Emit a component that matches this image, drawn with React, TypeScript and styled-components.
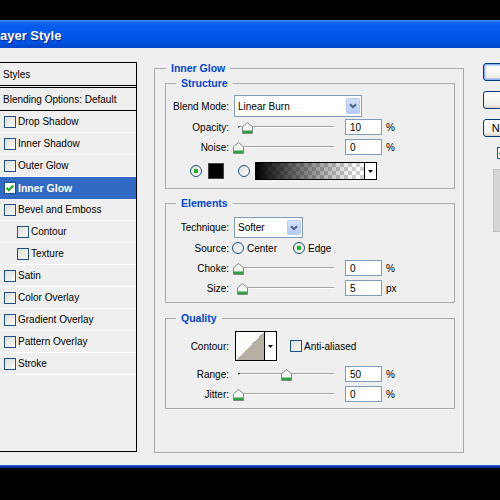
import React from "react";
import styled, { createGlobalStyle } from "styled-components";

const ui = `"Liberation Sans", Arial, sans-serif`;

const GlobalStyle = createGlobalStyle`
  html, body {
    margin: 0;
    padding: 0;
    background: #000;
    overflow: hidden;
  }
  body {
    font-family: ${ui};
    font-size: 10px;
    color: #000;
  }
`;

const Screen = styled.div`
  width: 500px;
  height: 500px;
  overflow: hidden;
  padding-top: 20px;
  box-sizing: border-box;
`;

const Window = styled.div`
  margin-left: -20px;
  width: 620px;
`;

const TitleBar = styled.div`
  height: 28px;
  box-sizing: border-box;
  display: flex;
  align-items: center;
  padding: 2px 0 0 12px;
  background: linear-gradient(
    to bottom,
    #4a93f7 0px,
    #1c6cf4 2px,
    #0a5eef 5px,
    #0057ea 14px,
    #0052e2 22px,
    #0146c8 28px
  );
  color: #fff;
  font: bold 13px ${ui};
  text-shadow: 1px 1px 0 #0b2a8f;
`;

const Body = styled.div`
  height: 417px;
  box-sizing: border-box;
  background: #efefef;
  display: flex;
  align-items: flex-start;
  padding: 14px 0 0 18px;
`;

const BottomFrame = styled.div`
  height: 3px;
  background: linear-gradient(to bottom, #3567e0, #0a2fae 60%, #041a6a);
`;

/* ---- styles list on the left ---- */

const StylesPanel = styled.div`
  width: 139px;
  height: 390px;
  box-sizing: border-box;
  border: 1px solid #000;
  background: #efefef;
  display: flex;
  flex-direction: column;
  flex-shrink: 0;
`;

const PanelHeader = styled.div`
  height: 25px;
  box-sizing: border-box;
  display: flex;
  align-items: center;
  padding-left: 4px;
  border-bottom: 3px double #000;
`;

const BlendingRow = styled.div`
  height: 23px;
  box-sizing: border-box;
  display: flex;
  align-items: center;
  padding-left: 4px;
  border-bottom: 1px solid #000;
`;

const StyleRow = styled.div<{ $active?: boolean; $sub?: boolean }>`
  height: 22px;
  box-sizing: border-box;
  display: flex;
  align-items: center;
  gap: 2px;
  padding-left: ${(p) => (p.$sub ? 18 : 5)}px;
  border-bottom: 1px solid ${(p) => (p.$active ? "#316ac5" : "#fff")};
  background: ${(p) => (p.$active ? "#316ac5" : "transparent")};
  color: ${(p) => (p.$active ? "#fff" : "#000")};
  font-weight: ${(p) => (p.$active ? "bold" : "normal")};
  font-size: ${(p) => (p.$active ? "10.5px" : "10px")};
`;

const CheckBox = styled.span<{ $white?: boolean }>`
  width: 12px;
  height: 12px;
  box-sizing: border-box;
  border: 1px solid #1c5180;
  background: ${(p) => (p.$white ? "#fff" : "linear-gradient(135deg, #dcdcd7, #fbfbf9)")};
  display: inline-flex;
  align-items: center;
  justify-content: center;
  flex-shrink: 0;
`;

const Tick = () => (
  <svg width="10" height="10" viewBox="0 0 10 10">
    <path d="M1.5 4.8 L3.8 7.2 L8.3 2.5" fill="none" stroke="#21a121" strokeWidth="2" />
  </svg>
);

/* ---- settings ---- */

const GroupBox = styled.fieldset`
  margin: 0 0 0 17px;
  padding: 3px 8px 0 10px;
  width: 310px;
  height: 391px;
  box-sizing: border-box;
  border: 1px solid #a9a9a9;
  min-width: 0;
  flex-shrink: 0;
`;

const Legend = styled.legend<{ $inset: number }>`
  padding: 0 5px;
  margin-left: ${(p) => p.$inset}px;
  font: bold 10.5px/12px ${ui};
  color: #0046d5;
`;

const SubGroup = styled.fieldset<{ $top: number; $h: number }>`
  margin: ${(p) => p.$top}px 0 0 0;
  padding: 0 0 0 7px;
  width: 290px;
  height: ${(p) => p.$h}px;
  box-sizing: border-box;
  border: 1px solid #a9a9a9;
  min-width: 0;
`;

const Row = styled.div<{ $top: number; $h: number }>`
  display: flex;
  align-items: center;
  margin-top: ${(p) => p.$top}px;
  height: ${(p) => p.$h}px;
`;

const Label = styled.span`
  width: 56px;
  margin-right: 5px;
  text-align: right;
  white-space: nowrap;
  flex-shrink: 0;
`;

const Select = styled.div<{ $w: number }>`
  width: ${(p) => p.$w}px;
  height: 100%;
  box-sizing: border-box;
  border: 1px solid #7f9db9;
  background: #fff;
  display: flex;
  align-items: center;
  justify-content: space-between;
  padding: 0 1px 0 3px;
`;

const ComboButton = styled.span`
  width: 14px;
  height: calc(100% - 4px);
  box-sizing: border-box;
  border: 1px solid #b9cbf3;
  border-radius: 2px;
  background: linear-gradient(to bottom, #d3e0fd, #b6cbf8);
  display: flex;
  align-items: center;
  justify-content: center;
`;

const Chevron = () => (
  <svg width="8" height="6" viewBox="0 0 8 6">
    <path d="M1 1.2 L4 4.2 L7 1.2" fill="none" stroke="#4d6185" strokeWidth="2" />
  </svg>
);

const SliderBox = styled.div`
  position: relative;
  width: 96px;
  height: 100%;
  margin-left: 4px;
  flex-shrink: 0;
`;

const Track = styled.div`
  margin-top: 7px;
  height: 1px;
  background: #a2a2a2;
  border-bottom: 1px solid #fff;
  border-left: 2px solid #555;
`;

const Thumb = styled.svg`
  position: absolute;
  top: 3px;
`;

const NumberField = styled.div`
  width: 37px;
  height: 16px;
  box-sizing: border-box;
  margin-left: 11px;
  border: 1px solid #7f9db9;
  background: #fff;
  padding-left: 4px;
  display: flex;
  align-items: center;
  flex-shrink: 0;
`;

const Unit = styled.span`
  margin-left: 4px;
`;

const Radio = styled.span<{ $on?: boolean; $gap?: number }>`
  width: 12px;
  height: 12px;
  box-sizing: border-box;
  border-radius: 50%;
  border: 1px solid #1c5180;
  background: ${(p) =>
    p.$on
      ? "radial-gradient(circle, #2fbf2f 0, #21a121 2px, transparent 2.6px), linear-gradient(135deg, #dcdcd7, #fff)"
      : "linear-gradient(135deg, #dcdcd7, #fff)"};
  margin-left: ${(p) => p.$gap ?? 0}px;
  flex-shrink: 0;
`;

const RadioText = styled.span`
  margin-left: 3px;
`;

const Swatch = styled.span`
  width: 16px;
  height: 16px;
  box-sizing: border-box;
  margin-left: 6px;
  background: #000;
  border: 1px solid #444;
`;

const GradientPicker = styled.div`
  width: 122px;
  height: 18px;
  margin-left: 5px;
  box-sizing: border-box;
  border: 1px solid #000;
  display: flex;
`;

const GradientRamp = styled.div`
  flex: 1;
  background:
    linear-gradient(to right, #000 0%, rgba(0, 0, 0, 0.85) 12%, rgba(0, 0, 0, 0) 92%),
    conic-gradient(#cfcfcf 25%, #fff 0 50%, #cfcfcf 0 75%, #fff 0) 0 0 / 8px 8px;
`;

const PickerArrow = styled.div`
  width: 11px;
  border-left: 1px solid #000;
  background: #fff;
  display: flex;
  align-items: center;
  justify-content: center;
`;

const DownTriangle = () => (
  <svg width="5" height="3" viewBox="0 0 5 3">
    <path d="M0 0 H5 L2.5 3 Z" fill="#000" />
  </svg>
);

const ContourPicker = styled.div`
  width: 42px;
  height: 30px;
  margin-left: 1px;
  box-sizing: border-box;
  border: 1px solid #000;
  display: flex;
`;

const ContourCurve = styled.div`
  flex: 1;
  background: linear-gradient(to bottom right, #fcfcfa 50%, #b5afa6 50%);
`;

const InlineCheck = styled.span`
  display: flex;
  align-items: center;
  margin-left: 13px;
  gap: 2px;
`;

/* ---- buttons on the right ---- */

const SideColumn = styled.div`
  margin-left: 19px;
  padding-top: 1px;
  display: flex;
  flex-direction: column;
`;

const PushButton = styled.div<{ $default?: boolean }>`
  width: 76px;
  height: 18px;
  box-sizing: border-box;
  margin-bottom: 10px;
  border: 1px solid #003c74;
  border-radius: 3px;
  background: linear-gradient(to bottom, #fff, #f0f0ea 80%, #d6d0c5);
  box-shadow: ${(p) => (p.$default ? "inset 0 0 0 1.5px #8eb2ef" : "none")};
  display: flex;
  align-items: center;
  justify-content: center;
  font: 11px ${ui};
`;

const PreviewToggle = styled.div`
  margin: 0 0 0 14px;
  display: flex;
  align-items: center;
  gap: 3px;
`;

const PreviewBox = styled.div`
  margin: 10px 0 0 10px;
  width: 60px;
  height: 63px;
  box-sizing: border-box;
  border: 1px solid #c4c4c4;
  background: #d6d6d6;
`;

type SliderProps = { label: string; value: string; frac: number; unit: string; top: number };

const SliderRow = ({ label, value, frac, unit, top }: SliderProps) => (
  <Row $top={top} $h={16}>
    <Label>{label}</Label>
    <SliderBox>
      <Track />
      <Thumb width="11" height="12" viewBox="0 0 11 12" style={{ left: frac * 96 - 5.5 }}>
        <path d="M0.5 4.8 L5.5 0.5 L10.5 4.8 V11.5 H0.5 Z" fill="#f7f7f5" stroke="#7d8c7f" />
        <rect x="1" y="8.5" width="9" height="2.5" fill="#2ea043" />
      </Thumb>
    </SliderBox>
    <NumberField>{value}</NumberField>
    <Unit>{unit}</Unit>
  </Row>
);

const styleItems = [
  { name: "Drop Shadow" },
  { name: "Inner Shadow" },
  { name: "Outer Glow" },
  { name: "Inner Glow", checked: true },
  { name: "Bevel and Emboss" },
  { name: "Contour", sub: true },
  { name: "Texture", sub: true },
  { name: "Satin" },
  { name: "Color Overlay" },
  { name: "Gradient Overlay" },
  { name: "Pattern Overlay" },
  { name: "Stroke" },
];

const App = () => {
  return (
    <>
      <GlobalStyle />
      <Screen>
        <Window>
          <TitleBar>Layer Style</TitleBar>
          <Body>
            <StylesPanel>
              <PanelHeader>Styles</PanelHeader>
              <BlendingRow>Blending Options: Default</BlendingRow>
              {styleItems.map((item) => (
                <StyleRow key={item.name} $active={item.checked} $sub={item.sub}>
                  <CheckBox $white={item.checked}>{item.checked && <Tick />}</CheckBox>
                  {item.name}
                </StyleRow>
              ))}
            </StylesPanel>

            <GroupBox>
              <Legend $inset={1}>Inner Glow</Legend>

              <SubGroup $top={0} $h={112}>
                <Legend $inset={3}>Structure</Legend>
                <Row $top={6} $h={22}>
                  <Label>Blend Mode:</Label>
                  <Select $w={128}>
                    Linear Burn
                    <ComboButton>
                      <Chevron />
                    </ComboButton>
                  </Select>
                </Row>
                <SliderRow top={2} label="Opacity:" value="10" frac={0.1} unit="%" />
                <SliderRow top={4} label="Noise:" value="0" frac={0} unit="%" />
                <Row $top={7} $h={18}>
                  <Radio $on $gap={17} />
                  <Swatch />
                  <Radio $gap={14} />
                  <GradientPicker>
                    <GradientRamp />
                    <PickerArrow>
                      <DownTriangle />
                    </PickerArrow>
                  </GradientPicker>
                </Row>
              </SubGroup>

              <SubGroup $top={8} $h={106}>
                <Legend $inset={3}>Elements</Legend>
                <Row $top={8} $h={21}>
                  <Label>Technique:</Label>
                  <Select $w={69}>
                    Softer
                    <ComboButton>
                      <Chevron />
                    </ComboButton>
                  </Select>
                </Row>
                <Row $top={4} $h={12}>
                  <Label>Source:</Label>
                  <Radio $gap={-2} />
                  <RadioText>Center</RadioText>
                  <Radio $gap={16} $on />
                  <RadioText>Edge</RadioText>
                </Row>
                <SliderRow top={6} label="Choke:" value="0" frac={0} unit="%" />
                <SliderRow top={4} label="Size:" value="5" frac={0.05} unit="px" />
              </SubGroup>

              <SubGroup $top={9} $h={97}>
                <Legend $inset={3}>Quality</Legend>
                <Row $top={7} $h={30}>
                  <Label>Contour:</Label>
                  <ContourPicker>
                    <ContourCurve />
                    <PickerArrow>
                      <DownTriangle />
                    </PickerArrow>
                  </ContourPicker>
                  <InlineCheck>
                    <CheckBox />
                    Anti-aliased
                  </InlineCheck>
                </Row>
                <SliderRow top={5} label="Range:" value="50" frac={0.5} unit="%" />
                <SliderRow top={4} label="Jitter:" value="0" frac={0} unit="%" />
              </SubGroup>
            </GroupBox>

            <SideColumn>
              <PushButton $default>OK</PushButton>
              <PushButton>Cancel</PushButton>
              <PushButton>New Style...</PushButton>
              <PreviewToggle>
                <CheckBox $white>
                  <Tick />
                </CheckBox>
                Preview
              </PreviewToggle>
              <PreviewBox />
            </SideColumn>
          </Body>
          <BottomFrame />
        </Window>
      </Screen>
    </>
  );
};

export default App;
